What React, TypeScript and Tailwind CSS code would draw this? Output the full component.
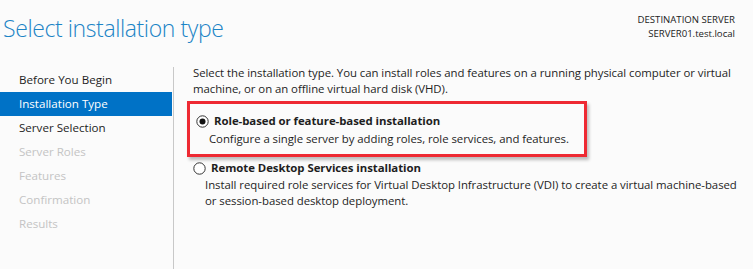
import React from "react";

const font = { fontFamily: '"Open Sans", "Noto Sans", sans-serif' };

function Radio({ checked }: { checked: boolean }) {
  return (
    <svg width="13" height="13" viewBox="0 0 13 13" className="shrink-0">
      <circle cx="6.5" cy="6.5" r="5.7" fill="#fff" stroke="#333" strokeWidth="1" />
      {checked && <circle cx="6.5" cy="6.5" r="3" fill="#111" />}
    </svg>
  );
}

export default function App() {
  const nav = [
    { t: "Before You Begin", s: "normal" },
    { t: "Installation Type", s: "active" },
    { t: "Server Selection", s: "normal" },
    { t: "Server Roles", s: "disabled" },
    { t: "Features", s: "disabled" },
    { t: "Confirmation", s: "disabled" },
    { t: "Results", s: "disabled" },
  ];
  return (
    <div className="w-[753px] h-[269px] bg-[#fbfbfb] overflow-hidden" style={font}>
      <div className="flex justify-between h-[67px]">
        <div className="pl-[3px] pt-[11px] text-[23px] tracking-[-0.4px] font-light text-[#1c84c6] leading-[34px]">
          Select installation type
        </div>
        <div className="pr-[18px] pt-[13px] text-right text-[9.6px] leading-[14px] text-[#222]">
          <div>DESTINATION SERVER</div>
          <div>SERVER01.test.local</div>
        </div>
      </div>
      <div className="flex h-[202px]">
        <div className="w-[174px] border-r border-[#c8c8c8] shrink-0 pt-[1px]">
          {nav.map((n) => (
            <div
              key={n.t}
              className={
                "h-[24px] pl-[19px] flex items-center text-[11.6px] " +
                (n.s === "active"
                  ? "bg-[#0072c6] text-white mr-px"
                  : n.s === "disabled"
                  ? "text-[#c4c4c4]"
                  : "text-[#1e1e1e]")
              }
            >
              {n.t}
            </div>
          ))}
        </div>
        <div className="pl-[19px] text-[11.4px] tracking-[-0.05px] leading-[16px] text-[#1e1e1e] whitespace-nowrap">
          <div className="-mt-[2px]">
            Select the installation type. You can install roles and features on a running physical computer or virtual
            <br />
            machine, or on an offline virtual hard disk (VHD).
          </div>
          <div className="mt-[4px] ml-[-6px] w-[400px] h-[56px] border-[3px] border-[#ee2a33] shadow-[2px_3px_3px_rgba(0,0,0,0.25)] pl-[6px] pt-[9px]">
            <div className="flex items-center gap-[5px]">
              <Radio checked />
              <span className="font-bold">Role-based or feature-based installation</span>
            </div>
            <div className="ml-[13px] mt-[2px]">Configure a single server by adding roles, role services, and features.</div>
          </div>
          <div className="mt-[3px]">
            <div className="flex items-center gap-[5px]">
              <Radio checked={false} />
              <span className="font-bold">Remote Desktop Services installation</span>
            </div>
            <div className="ml-[12px] mt-[1px]">
              Install required role services for Virtual Desktop Infrastructure (VDI) to create a virtual machine-based
              <br />
              or session-based desktop deployment.
            </div>
          </div>
        </div>
      </div>
    </div>
  );
}
